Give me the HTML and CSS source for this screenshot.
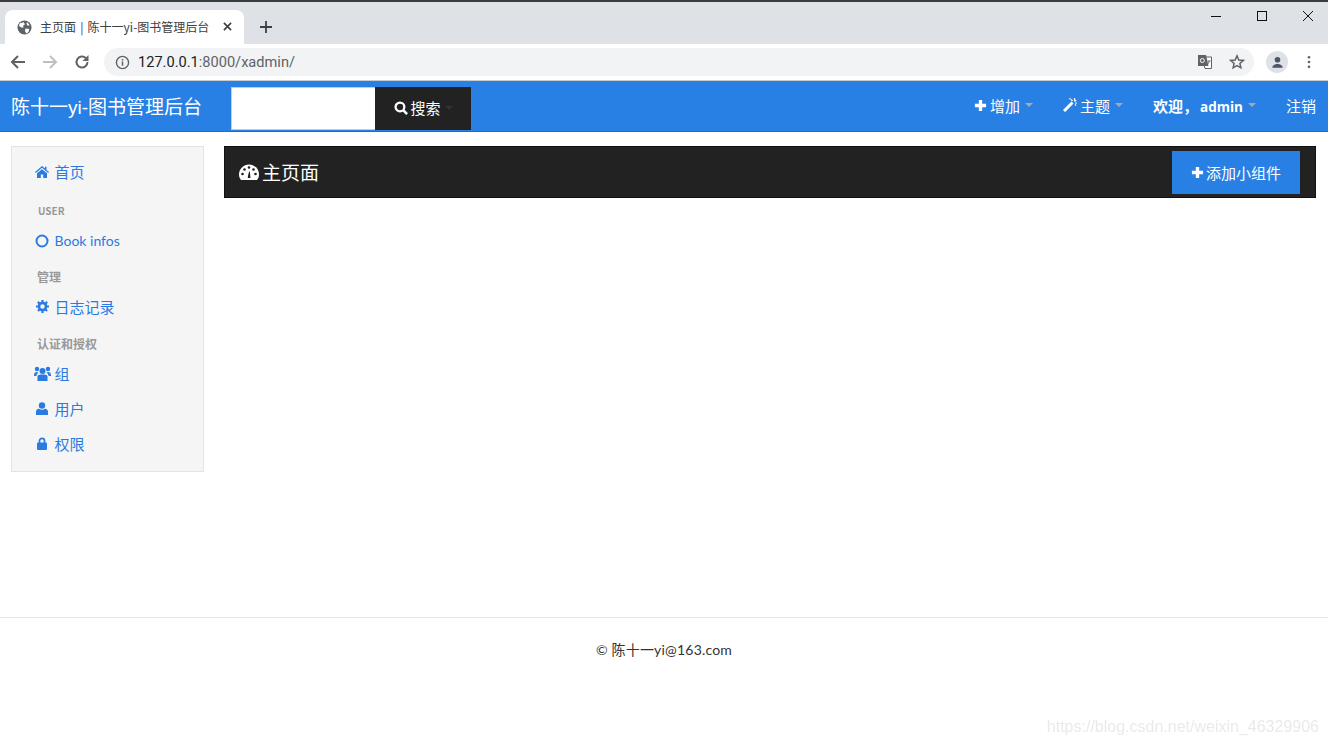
FILE: index.html
```html
<!DOCTYPE html>
<html lang="zh">
<head>
  <meta charset="UTF-8">
  <meta name="viewport" content="width=device-width, initial-scale=1.0">
  <title>主页面 | 陈十一yi-图书管理后台</title>
  <link rel="stylesheet" href="styles.css">
</head>
<body>
  <!-- Browser frame -->
  <div class="tabstrip">
    <div class="tab">
      <svg class="tab-favicon" viewBox="0 0 16 16"><circle cx="8" cy="8" r="7.5" fill="#5f6368"/><path d="M3 3.5 7 2.5 8.5 4.5 6.5 6 7 8 4.5 8 2 6ZM9 9l4 .5-.5 3L10 14.5 8.500 12ZM11 2.500l2.500 3-2 .5-1.500-2Z" fill="#fff"/></svg>
      <span class="tab-title">主页面 | 陈十一yi-图书管理后台</span>
      <svg class="tab-close" viewBox="0 0 10 10"><path d="M1 1 9 9M9 1 1 9" stroke="#3c4043" stroke-width="1.8"/></svg>
    </div>
    <svg class="tab-new" viewBox="0 0 12 12"><path d="M6 0V12M0 6H12" stroke="#3c4043" stroke-width="1.8"/></svg>
    <div class="window-btns">
      <svg viewBox="0 0 12 12"><path d="M1 6.500H11" stroke="#111" stroke-width="1"/></svg>
      <svg viewBox="0 0 12 12"><rect x="1.500" y="1.500" width="9" height="9" fill="none" stroke="#111" stroke-width="1"/></svg>
      <svg viewBox="0 0 12 12"><path d="M1 1 11 11M11 1 1 11" stroke="#111" stroke-width="1"/></svg>
    </div>
  </div>
  <div class="toolbar">
    <svg class="tool-icon" viewBox="0 0 16 16"><path d="M15 8H2M8 2 2 8l6 6" fill="none" stroke="#5f6368" stroke-width="2"/></svg>
    <svg class="tool-icon" viewBox="0 0 16 16"><path d="M1 8H14M8 2l6 6-6 6" fill="none" stroke="#bdc1c6" stroke-width="2"/></svg>
    <svg class="tool-icon" viewBox="0 0 16 16"><path d="M13.500 8a5.500 5.500 0 1 1-1.600-3.900" fill="none" stroke="#5f6368" stroke-width="2"/><path d="M14.500 1v6h-6z" fill="#5f6368"/></svg>
    <div class="omnibox">
      <svg class="omni-info" viewBox="0 0 16 16"><circle cx="8" cy="8" r="6.500" fill="none" stroke="#5f6368" stroke-width="1.500"/><path d="M8 7v4.500M8 4.300v1.500" stroke="#5f6368" stroke-width="1.600"/></svg>
      <span class="omni-url"><b>127.0.0.1</b>:8000/xadmin/</span>
      <svg class="omni-translate" viewBox="0 0 16 16"><path d="M5 3h9.500v11.500H8z" fill="#fff" stroke="#5f6368"/><path d="M1 1h8l2.500 11H1z" fill="#5f6368"/><circle cx="5.300" cy="6.500" r="2" fill="none" stroke="#fff"/><path d="M10.500 7h3M12 7c0 2-1 3-2 4" fill="none" stroke="#5f6368"/></svg>
      <svg class="omni-star" viewBox="0 0 16 16"><path d="M8 1.800 9.800 6l4.500.4-3.400 3 1 4.400L8 11.500l-3.900 2.300 1-4.400-3.400-3L6.200 6z" fill="none" stroke="#5f6368" stroke-width="1.500"/></svg>
    </div>
    <div class="avatar">
      <svg viewBox="0 0 16 16"><circle cx="8" cy="5" r="3" fill="#4d5565"/><path d="M2.500 13.500c0-2.500 3-3.800 5.500-3.800s5.500 1.300 5.500 3.800z" fill="#4d5565"/></svg>
    </div>
    <svg class="tool-menu" viewBox="0 0 4 16"><circle cx="2" cy="2.500" r="1.500" fill="#5f6368"/><circle cx="2" cy="8" r="1.500" fill="#5f6368"/><circle cx="2" cy="13.500" r="1.500" fill="#5f6368"/></svg>
  </div>

  <!-- Top navigation -->
  <nav class="navbar">
    <a class="brand">陈十一yi-图书管理后台</a>
    <form class="search">
      <div class="search-input"></div>
      <button class="search-btn" type="button">
        <svg class="icon" viewBox="0 0 16 16"><circle cx="6.800" cy="6.800" r="5" fill="none" stroke="#fff" stroke-width="2.600"/><path d="m10.500 10.500 4.500 4.500" stroke="#fff" stroke-width="3"/></svg>
        <span>搜索</span><i class="caret caret-dark"></i>
      </button>
    </form>
    <ul class="nav-right">
      <li class="nav-add">
        <svg class="icon icon-plus" viewBox="0 0 14 14"><path d="M7 1v12M1 7h12" stroke="#fff" stroke-width="3.600"/></svg>
        <span>增加</span><i class="caret"></i>
      </li>
      <li class="nav-theme">
        <svg class="icon" viewBox="0 0 14 14"><path d="M1 13 9.500 4.500" stroke="#fff" stroke-width="3"/><path d="M11.500 0v2.500M8 1.500l1.500 1.500M11.500 3.500l1.500-1.500M12 5h2M12 6.500l1 1M7 0v1.500" stroke="#fff" stroke-width="1.200"/></svg>
        <span>主题</span><i class="caret"></i>
      </li>
      <li class="nav-user"><span>欢迎，</span><span class="nav-admin">admin</span><i class="caret"></i></li>
      <li class="nav-logout">注销</li>
    </ul>
  </nav>

  <main class="content">
    <aside class="sidebar">
      <a class="side-link">
        <span class="side-icon"><svg viewBox="0 0 14 12" width="14" height="12"><path d="M7 0 0 6l.8 1L7 1.800 13.200 7l.8-1-2.500-2.100V.8H10v1.800zM2 7.300V12h3.800V8.500h2.400V12H12V7.300L7 3.200z" fill="#2a7ae2"/></svg></span>首页
      </a>
      <div class="side-head side-head-first">USER</div>
      <a class="side-link side-link-en">
        <span class="side-icon"><svg viewBox="0 0 14 14" width="14" height="14"><circle cx="7" cy="7" r="5.500" fill="none" stroke="#2a7ae2" stroke-width="2"/></svg></span>Book infos
      </a>
      <div class="side-head side-head-cn">管理</div>
      <a class="side-link">
        <span class="side-icon"><svg viewBox="0 0 14 14" width="13" height="13"><circle cx="7" cy="7" r="3.800" fill="none" stroke="#2a7ae2" stroke-width="2.800"/><path d="M7 0v14M0 7h14M2 2l10 10M12 2 2 12" stroke="#2a7ae2" stroke-width="2.400" stroke-dasharray="2.400 9.200 2.400"/></svg></span>日志记录
      </a>
      <div class="side-head side-head-cn">认证和授权</div>
      <a class="side-link">
        <span class="side-icon"><svg viewBox="0 0 17 15" width="17" height="15"><circle cx="8.500" cy="5" r="3" fill="#2a7ae2"/><circle cx="3" cy="3" r="2.200" fill="#2a7ae2"/><circle cx="14" cy="3" r="2.200" fill="#2a7ae2"/><path d="M3.500 15V10.500c0-1.500 1.500-2 5-2s5 .5 5 2V15z" fill="#2a7ae2"/><path d="M0 9.500c0-2.500 1-3.500 3-3.500l1.500.8c-1 .6-2 1.500-2 3.200H0zM17 9.500c0-2.500-1-3.500-3-3.500l-1.500.8c1 .6 2 1.500 2 3.200H17z" fill="#2a7ae2"/></svg></span>组
      </a>
      <a class="side-link">
        <span class="side-icon"><svg viewBox="0 0 12 13" width="12" height="13"><circle cx="6" cy="3.500" r="3.200" fill="#2a7ae2"/><path d="M0 13V9.800C0 8 1.500 6.800 3 6.800c1.800 1.300 4.200 1.300 6 0 1.500 0 3 1.200 3 3V13z" fill="#2a7ae2"/></svg></span>用户
      </a>
      <a class="side-link">
        <span class="side-icon"><svg viewBox="0 0 10 13" width="10" height="13"><path d="M2.500 6V3.800a2.500 2.500 0 0 1 5 0V6" fill="none" stroke="#2a7ae2" stroke-width="1.700"/><rect y="5.500" width="10" height="7.500" rx="1" fill="#2a7ae2"/></svg></span>权限
      </a>
    </aside>

    <section class="main-panel">
      <div class="page-head">
        <h1 class="page-title">
          <svg viewBox="0 0 20 16" width="20" height="16"><path d="M2 16C.7 14.500 0 12.500 0 10.500 0 5 4.500.5 10 .5S20 5 20 10.500c0 2-.7 4-2 5.500z" fill="#fff"/><circle cx="3.500" cy="10" r="1.300" fill="#222"/><circle cx="5.500" cy="5.500" r="1.300" fill="#222"/><circle cx="10" cy="3.500" r="1.300" fill="#222"/><circle cx="14.500" cy="5.500" r="1.300" fill="#222"/><circle cx="16.500" cy="10" r="1.300" fill="#222"/><path d="M8.800 14c0-2 1-6 1.700-7 .5 1.500.9 5 .9 7z" fill="#222"/></svg>
          <span>主页面</span>
        </h1>
        <button class="add-widget" type="button">
          <svg class="icon icon-plus" viewBox="0 0 14 14"><path d="M7 1v12M1 7h12" stroke="#fff" stroke-width="3.600"/></svg>
          <span>添加小组件</span>
        </button>
      </div>
    </section>
  </main>

  <footer class="footer">© 陈十一yi@163.com</footer>
  <div class="watermark">https://blog.csdn.net/weixin_46329906</div>
</body>
</html>
```

FILE: styles.css
```css
* {
  box-sizing: border-box;
}

html, body {
  height: 743px;
  overflow: hidden;
}

body {
  margin: 0;
  position: relative;
  font-family: "Noto Sans CJK SC", "Noto Sans", sans-serif;
  font-size: 15px;
  color: #333;
  background: #fff;
}

/* browser frame */
.tabstrip {
  height: 44px;
  background: #dee1e6;
  border-top: 2px solid #3a3b3d;
  display: flex;
  align-items: flex-end;
  padding-left: 5px;
}

.tab {
  width: 239px;
  height: 34px;
  background: #fff;
  border-radius: 8px 8px 0 0;
  display: flex;
  align-items: center;
  padding: 0 12px;
}

.tab-favicon {
  width: 15px;
  height: 15px;
  flex: none;
}

.tab-title {
  margin: 0 0 2px 8px;
  font-size: 12px;
  word-spacing: 1.500px;
  color: #3c4043;
  white-space: nowrap;
  flex: 1;
}

.tab-close {
  width: 9px;
  height: 9px;
  flex: none;
  margin-bottom: 1px;
}

.tab-new {
  width: 12px;
  height: 12px;
  margin: 0 0 11px 16px;
}

.window-btns {
  margin-left: auto;
  align-self: flex-start;
  display: flex;
  gap: 34px;
  padding: 8px 14px 0 0;
}

.window-btns svg {
  width: 12px;
  height: 12px;
}

.toolbar {
  height: 37px;
  background: #fff;
  border-bottom: 1px solid #c8cbd0;
  display: flex;
  align-items: center;
  padding-left: 10px;
}

.tool-icon {
  width: 16px;
  height: 16px;
  margin-right: 16px;
  flex: none;
}

.omnibox {
  width: 1150px;
  height: 28px;
  margin-left: -2px;
  background: #f1f3f4;
  border-radius: 14px;
  display: flex;
  align-items: center;
  padding: 0 9px 0 11px;
}

.omni-info {
  width: 15px;
  height: 15px;
  flex: none;
}

.omni-url {
  margin-left: 8px;
  font-family: "Roboto", "Liberation Sans", sans-serif;
  font-size: 14.600px;
  color: #5f6368;
  flex: 1;
}

.omni-url b {
  font-weight: 400;
  color: #202124;
}

.omni-translate {
  width: 16px;
  height: 16px;
  margin-right: 16px;
}

.omni-star {
  width: 16px;
  height: 16px;
}

.avatar {
  width: 22px;
  height: 22px;
  margin-left: 12px;
  border-radius: 50%;
  background: #dee1e6;
  display: flex;
  align-items: center;
  justify-content: center;
}

.avatar svg {
  width: 15px;
  height: 15px;
}

.tool-menu {
  width: 4px;
  height: 14px;
  margin-left: 19px;
}

/* top navigation */
.navbar {
  height: 51px;
  background: #2980e4;
  border-bottom: 1px solid #1f6cc6;
  display: flex;
  align-items: center;
  color: #fff;
}

.brand {
  margin: 0 0 2px 11px;
  width: 220px;
  font-family: "Liberation Sans", "Noto Sans CJK SC", sans-serif;
  font-size: 19px;
  white-space: nowrap;
}

.search {
  display: flex;
  height: 43px;
  align-self: flex-start;
  margin-top: 6px;
}

.search-input {
  width: 144px;
  background: #fff;
  border: 1px solid #ccc;
  border-width: 1px 0 1px 1px;
}

.search-btn {
  width: 96px;
  background: #222;
  border: none;
  color: #fff;
  font: inherit;
  display: flex;
  align-items: center;
  justify-content: center;
  gap: 2px;
  padding: 0 0 2px 1px;
}

.icon {
  width: 14px;
  height: 14px;
  flex: none;
}

.icon-plus {
  width: 13px;
  height: 13px;
}

.caret {
  display: inline-block;
  width: 0;
  height: 0;
  margin-left: 2px;
  border-top: 4px solid #a9a9a9;
  border-left: 4px solid transparent;
  border-right: 4px solid transparent;
}

.caret-dark {
  border-top-color: #333;
  margin-left: 2px;
}

.nav-right {
  list-style: none;
  margin: 0 0 0 auto;
  padding: 0 12px 2px 0;
  display: flex;
  align-items: center;
  gap: 30px;
}

.nav-right li {
  display: flex;
  align-items: center;
  gap: 3px;
  white-space: nowrap;
}

.nav-right .nav-user {
  font-weight: 700;
  gap: 0;
}

.nav-admin {
  margin: 3px 0 0 2px;
  font-family: "Open Sans", "Noto Sans", sans-serif;
  font-size: 13.500px;
}

.nav-user .caret {
  margin-left: 5px;
}

/* page body */
.content {
  height: 486px;
  padding: 14px 12px 0 11px;
  display: flex;
  align-items: flex-start;
  gap: 20px;
  border-bottom: 1px solid #e7e7e7;
}

.sidebar {
  width: 193px;
  height: 326px;
  flex: none;
  background: #f5f5f5;
  border: 1px solid #e3e3e3;
  padding: 7px 0 0 23px;
  display: flex;
  flex-direction: column;
}

.side-link {
  height: 35px;
  flex: none;
  display: flex;
  align-items: center;
  color: #2a7ae2;
  font-family: "Lato", "Noto Sans CJK SC", sans-serif;
  font-size: 15px;
}

.side-link-en {
  font-size: 14px;
  padding-top: 2px;
}

.side-icon {
  width: 14px;
  margin-right: 5.500px;
  flex: none;
  display: flex;
  justify-content: center;
}

.side-icon svg {
  flex: none;
}

.side-head {
  height: 24px;
  flex: none;
  margin-top: 8px;
  padding-left: 3px;
  line-height: 24px;
  font-size: 10px;
  font-weight: 700;
  color: #999;
}

.side-head-first {
  margin-top: 10px;
  height: 23px;
}

.side-head-cn {
  font-size: 12px;
  padding-left: 2px;
}

.main-panel {
  flex: 1;
}

.page-head {
  height: 52px;
  background: #222;
  border: 1px solid #111;
  display: flex;
  align-items: center;
  justify-content: space-between;
  padding: 0 15px 0 14px;
}

.page-title {
  margin: 0 0 1px;
  display: flex;
  align-items: center;
  gap: 3px;
  font-size: 19px;
  font-weight: 400;
  color: #fff;
}

.add-widget {
  width: 128px;
  height: 43px;
  background: #2980e4;
  border: none;
  color: #fff;
  font: inherit;
  display: flex;
  align-items: center;
  justify-content: center;
  gap: 2px;
  padding: 0;
}

.footer {
  padding-top: 22px;
  text-align: center;
  font-family: "Lato", "Noto Sans CJK SC", sans-serif;
  font-size: 14px;
  line-height: 20px;
  letter-spacing: 0.200px;
}

/* faint address stamped in the corner */
.watermark {
  position: absolute;
  right: 9px;
  bottom: 7px;
  font-family: "Liberation Sans", Arial, sans-serif;
  font-size: 16px;
  color: #eaeaea;
  filter: blur(0.5px);
}
```
